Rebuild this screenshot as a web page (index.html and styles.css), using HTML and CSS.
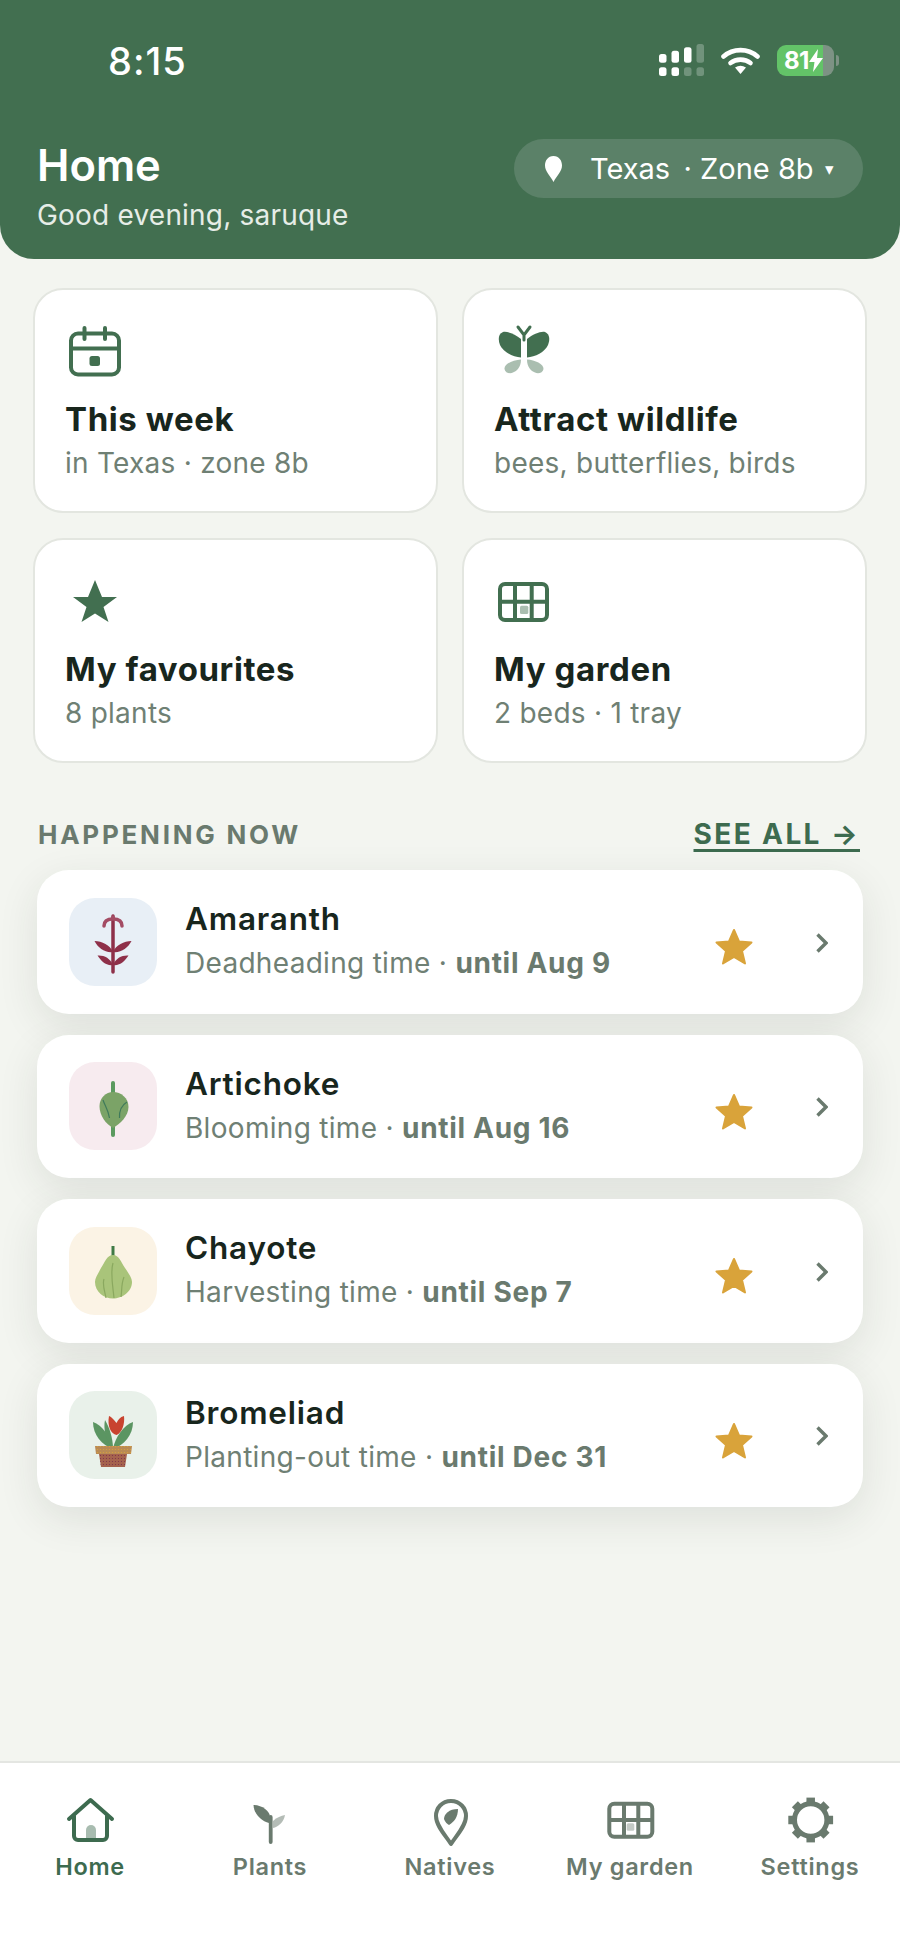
FILE: index.html
```html
<!DOCTYPE html>
<html lang="en">
<head>
    <meta charset="UTF-8">
    <meta name="viewport" content="width=device-width, initial-scale=1.0">
    <title>Home</title>
    <link rel="stylesheet" href="styles.css">
</head>
<body>
    <header class="top">
        <div class="status">
            <span class="time">8:15</span>
            <div class="status-icons">
                <svg class="signal" width="45" height="32" viewBox="0 0 45 32" fill="#fff">
                    <rect x="0" y="10" width="7.5" height="8.7" rx="2.5"/>
                    <rect x="12.5" y="6.7" width="7.5" height="12" rx="2.5"/>
                    <rect x="25" y="3.3" width="7.5" height="15.4" rx="2.5"/>
                    <rect x="37.5" y="0" width="7.5" height="18.7" rx="2.5" opacity=".25"/>
                    <rect x="0" y="23.3" width="7.5" height="8.7" rx="2.5"/>
                    <rect x="12.5" y="23.3" width="7.5" height="8.7" rx="2.5"/>
                    <rect x="25" y="23.3" width="7.5" height="8.7" rx="2.5" opacity=".25"/>
                    <rect x="37.5" y="23.3" width="7.5" height="8.7" rx="2.5" opacity=".25"/>
                </svg>
                <svg class="wifi" width="39" height="27" viewBox="0 0 39 27" fill="none" stroke="#fff" stroke-width="4.6" stroke-linecap="round">
                    <path d="M2.5 9.5C12 1 27 1 36.5 9.5"/>
                    <path d="M9.5 16C15 11.5 24 11.5 29.5 16"/>
                    <path d="M14 20.5Q19.5 17 25 20.5L19.5 27Z" fill="#fff" stroke="none"/>
                </svg>
                <div class="battery-wrap">
                    <div class="battery">
                        <span>81</span>
                        <svg width="14" height="23" viewBox="0 0 14 23" fill="#fff"><path d="M9 0 0 13h5.500L4 23l10-14H8z"/></svg>
                    </div>
                    <div class="battery-nub"></div>
                </div>
            </div>
        </div>
        <div class="top-row">
            <div>
                <h1>Home</h1>
                <p class="greeting">Good evening, saruque</p>
            </div>
            <button class="location">
                <svg width="23" height="26" viewBox="0 0 23 26" fill="#fff"><path d="M11.500 0C6 0 3 4.500 3 9.500 3 15.500 8.500 20 11.500 26 14.500 20 20 15.500 20 9.500 20 4.500 17 0 11.500 0Z"/></svg>
                <span class="location-name">Texas &#8201;· Zone 8b</span>
                <span class="caret">▾</span>
            </button>
        </div>
    </header>

    <main class="content">
        <section class="cards">
            <div class="card">
                <svg class="card-icon" width="58" height="58" viewBox="0 0 58 58" fill="none" stroke="#426f50" stroke-width="4">
                    <rect x="5" y="10.500" width="48" height="41" rx="7"/>
                    <path d="M5 25.500h48"/>
                    <path d="M18.500 5v11M39 5v11" stroke-linecap="round"/>
                    <rect x="23.500" y="33" width="10.500" height="10" rx="2.500" fill="#426f50" stroke="none"/>
                </svg>
                <h3>This week</h3>
                <p>in Texas · zone 8b</p>
            </div>
            <div class="card">
                <svg class="card-icon" width="58" height="58" viewBox="0 0 58 58" fill="#426f50">
                    <path d="M26 16C20 11 12 8 8 9 3 11 3 17 5 22c3 7 13 12 21 12.500Z"/>
                    <path d="M32 16C38 11 46 8 50 9c5 2 5 8 3 13-3 7-13 12-21 12.500Z"/>
                    <path opacity=".45" d="M26 36.500C18 37 9 41 9.500 46c.5 4 5.500 5 8.500 3.500 4-1.500 8-5.500 8-13Z"/>
                    <path opacity=".45" d="M32 36.500C40 37 49 41 48.500 46c-.5 4-5.500 5-8.500 3.500-4-1.500-8-5.500-8-13Z"/>
                    <path d="M23 4l6 8 6-8M29 12v5" fill="none" stroke="#426f50" stroke-width="3" stroke-linecap="round"/>
                </svg>
                <h3>Attract wildlife</h3>
                <p>bees, butterflies, birds</p>
            </div>
            <div class="card">
                <svg class="card-icon" width="58" height="58" viewBox="0 0 58 58" fill="#426f50">
                    <polygon points="29,7 36,24 51,24 37.500,34 42.500,49 29,40.500 15.500,49 20.500,34 7,24 22,24"/>
                </svg>
                <h3>My favourites</h3>
                <p>8 plants</p>
            </div>
            <div class="card">
                <svg class="card-icon" width="58" height="58" viewBox="0 0 58 58" fill="none" stroke="#426f50" stroke-width="4">
                    <rect x="5" y="11" width="47" height="36" rx="5"/>
                    <path d="M20 11v36M36.700 11v36M5 28.700h47"/>
                    <rect x="25" y="32.700" width="8.300" height="8.300" rx="1.500" fill="#426f50" stroke="none" opacity=".45"/>
                </svg>
                <h3>My garden</h3>
                <p>2 beds · 1 tray</p>
            </div>
        </section>

        <div class="section-head">
            <h2>HAPPENING NOW</h2>
            <a class="see-all" href="#">SEE ALL →</a>
        </div>

        <section class="rows">
            <div class="row">
                <div class="thumb thumb-blue">
                    <svg width="88" height="88" viewBox="0 0 88 88" fill="none">
                        <path d="M44 18v56" stroke="#8e3049" stroke-width="3.500" stroke-linecap="round"/>
                        <path d="M35 28C35 23 39 21 44 21s9 2 9 7" stroke="#a44c64" stroke-width="3.500" stroke-linecap="round"/>
                        <path d="M40.500 22 44 16.500 47.500 22Z" fill="#a44c64"/>
                        <path d="M25.500 43C33 43 41 47 44 54 36 55 29 50 25.500 43ZM62.500 43C55 43 47 47 44 54 52 55 59 50 62.500 43Z" fill="#8e3049"/>
                        <path d="M28.500 57.500C35 57 41 60 44 67 37 68 32 63 28.500 57.500ZM59.500 57.500C53 57 47 60 44 67 51 68 56 63 59.500 57.500Z" fill="#8e3049"/>
                    </svg>
                </div>
                <div class="row-text">
                    <h3>Amaranth</h3>
                    <p>Deadheading time · <b>until Aug 9</b></p>
                </div>
                <svg class="row-star" width="38" height="37" viewBox="0 0 38 37" fill="#d9a33a" stroke="#d9a33a" stroke-width="2" stroke-linejoin="round">
                    <polygon points="19,2 24,13.500 36.500,14.500 27,23 30,35.500 19,29 8,35.500 11,23 1.500,14.500 14,13.500"/>
                </svg>
                <svg class="chevron" width="12" height="20" viewBox="0 0 12 20" fill="none" stroke="#6a7a6e" stroke-width="3.400"><path d="M1.500 1.500 10 10l-8.500 8.500"/></svg>
            </div>
            <div class="row">
                <div class="thumb thumb-pink">
                    <svg width="88" height="88" viewBox="0 0 88 88" fill="none">
                        <path d="M44 21v52" stroke="#5b9a5f" stroke-width="4" stroke-linecap="round"/>
                        <path d="M44 30C52 30 59.500 36 59.500 45 59.500 54 51 62 44 66 37 62 30.500 54 30.500 44 30.500 36 37 30 44 30Z" fill="#7ba367"/>
                        <path d="M34 38C36 44 39 47 40.500 56M58 40C53 43 50 48 50.500 56" stroke="#3f7a5a" stroke-width="1.200"/>
                    </svg>
                </div>
                <div class="row-text">
                    <h3>Artichoke</h3>
                    <p>Blooming time · <b>until Aug 16</b></p>
                </div>
                <svg class="row-star" width="38" height="37" viewBox="0 0 38 37" fill="#d9a33a" stroke="#d9a33a" stroke-width="2" stroke-linejoin="round">
                    <polygon points="19,2 24,13.500 36.500,14.500 27,23 30,35.500 19,29 8,35.500 11,23 1.500,14.500 14,13.500"/>
                </svg>
                <svg class="chevron" width="12" height="20" viewBox="0 0 12 20" fill="none" stroke="#6a7a6e" stroke-width="3.400"><path d="M1.500 1.500 10 10l-8.500 8.500"/></svg>
            </div>
            <div class="row">
                <div class="thumb thumb-cream">
                    <svg width="88" height="88" viewBox="0 0 88 88" fill="none">
                        <path d="M44 19v11" stroke="#3f7a45" stroke-width="3"/>
                        <path d="M44 28C50 28 52 35 56 41 60 47 63 51 63 55 63 65 53 71.500 44 71.500 35 71.500 26 65 26 55 26 51 29 47 32 41 36 35 38 28 44 28Z" fill="#a9c47a"/>
                        <path d="M35 52C33 58 36 65 37 71M44 36C41 46 44 60 45 71M55 50C52 57 53 65 52 70" stroke="#8aa85f" stroke-width="1.200"/>
                    </svg>
                </div>
                <div class="row-text">
                    <h3>Chayote</h3>
                    <p>Harvesting time · <b>until Sep 7</b></p>
                </div>
                <svg class="row-star" width="38" height="37" viewBox="0 0 38 37" fill="#d9a33a" stroke="#d9a33a" stroke-width="2" stroke-linejoin="round">
                    <polygon points="19,2 24,13.500 36.500,14.500 27,23 30,35.500 19,29 8,35.500 11,23 1.500,14.500 14,13.500"/>
                </svg>
                <svg class="chevron" width="12" height="20" viewBox="0 0 12 20" fill="none" stroke="#6a7a6e" stroke-width="3.400"><path d="M1.500 1.500 10 10l-8.500 8.500"/></svg>
            </div>
            <div class="row">
                <div class="thumb thumb-green">
                    <svg width="88" height="88" viewBox="0 0 88 88" fill="none">
                        <defs>
                            <pattern id="potDots" width="3" height="3" patternUnits="userSpaceOnUse">
                                <circle cx="1.500" cy="1.500" r=".6" fill="#7c2f4a"/>
                            </pattern>
                            <pattern id="rimDots" width="3" height="3" patternUnits="userSpaceOnUse">
                                <circle cx="1.500" cy="1.500" r=".6" fill="#d9a33a"/>
                            </pattern>
                        </defs>
                        <path d="M24 31C33 34 42 46 44 58 33 54 24 44 24 31Z" fill="#5b9562"/>
                        <path d="M64 31C55 34 46 46 44 58 55 54 64 44 64 31Z" fill="#5b9562"/>
                        <path d="M36 29C40 36 44 46 44 58 37 50 34 38 36 29Z" fill="#5b9562"/>
                        <path d="M40 25C43 26 46 30 47.500 32 49 29 51 26 55 25 56 33 53 42 47.500 44 42 43 38 35 40 25Z" fill="#c8432f"/>
                        <path d="M30 63h28l-2 13H32Z" fill="#a5624d"/>
                        <path d="M30 63h28l-2 13H32Z" fill="url(#potDots)"/>
                        <path d="M26 55h37l-1 8H27Z" fill="#b98a55"/>
                        <path d="M26 55h37l-1 8H27Z" fill="url(#rimDots)"/>
                    </svg>
                </div>
                <div class="row-text">
                    <h3>Bromeliad</h3>
                    <p>Planting-out time · <b>until Dec 31</b></p>
                </div>
                <svg class="row-star" width="38" height="37" viewBox="0 0 38 37" fill="#d9a33a" stroke="#d9a33a" stroke-width="2" stroke-linejoin="round">
                    <polygon points="19,2 24,13.500 36.500,14.500 27,23 30,35.500 19,29 8,35.500 11,23 1.500,14.500 14,13.500"/>
                </svg>
                <svg class="chevron" width="12" height="20" viewBox="0 0 12 20" fill="none" stroke="#6a7a6e" stroke-width="3.400"><path d="M1.500 1.500 10 10l-8.500 8.500"/></svg>
            </div>
        </section>
    </main>

    <nav class="tabs">
        <a class="tab tab-active" href="#">
            <svg width="60" height="50" viewBox="0 0 60 50" fill="none" stroke="currentColor" stroke-width="4" stroke-linecap="round" stroke-linejoin="round">
                <path d="M26 43h10V33a5 5 0 0 0-10 0Z" fill="currentColor" stroke="none" opacity=".45"/>
                <path d="M9 22 30.500 3 52 22"/>
                <path d="M14 19v20a4 4 0 0 0 4 4h25a4 4 0 0 0 4-4V19"/>
            </svg>
            <span>Home</span>
        </a>
        <a class="tab" href="#">
            <svg width="60" height="50" viewBox="0 0 60 50" fill="currentColor">
                <path d="M30.700 20v25" stroke="currentColor" stroke-width="3.800" stroke-linecap="round"/>
                <path d="M13.500 8C22 8 30 14 30 20l-1 6C22 24 14 18 13.500 8Z"/>
                <path d="M33 24C37 20 41 19 45 18 44 25 38 30 33 31Z" opacity=".5"/>
            </svg>
            <span>Plants</span>
        </a>
        <a class="tab" href="#">
            <svg width="60" height="50" viewBox="0 0 60 50" fill="none" stroke="currentColor" stroke-width="4" stroke-linejoin="round">
                <path d="M31 4C22 4 16 11 16 19 16 29 26 39 31 47 36 39 46 29 46 19 46 11 40 4 31 4Z"/>
                <path d="M38 12C29 12 24 17 24 22 25 25 27 27 29 28 34 25 38 20 38 12Z" fill="currentColor" stroke="none"/>
            </svg>
            <span>Natives</span>
        </a>
        <a class="tab" href="#">
            <svg width="60" height="50" viewBox="0 0 60 50" fill="none" stroke="currentColor" stroke-width="4">
                <rect x="9.300" y="6.700" width="43" height="33" rx="5"/>
                <path d="M24 6.700v33M38.300 6.700v33M9.300 23h43"/>
                <rect x="26.700" y="26.300" width="7.600" height="7.400" rx="1.500" fill="currentColor" stroke="none" opacity=".4"/>
            </svg>
            <span>My garden</span>
        </a>
        <a class="tab" href="#">
            <svg width="60" height="50" viewBox="0 0 60 50" fill="none" stroke="currentColor">
                <circle cx="30.700" cy="23" r="16.200" stroke-width="5"/>
                <g stroke-width="8.500">
                    <path d="M30.700 0.600v6"/>
                    <path d="M30.700 0.600v6" transform="rotate(45 30.700 23)"/>
                    <path d="M30.700 0.600v6" transform="rotate(90 30.700 23)"/>
                    <path d="M30.700 0.600v6" transform="rotate(135 30.700 23)"/>
                    <path d="M30.700 0.600v6" transform="rotate(180 30.700 23)"/>
                    <path d="M30.700 0.600v6" transform="rotate(225 30.700 23)"/>
                    <path d="M30.700 0.600v6" transform="rotate(270 30.700 23)"/>
                    <path d="M30.700 0.600v6" transform="rotate(315 30.700 23)"/>
                </g>
            </svg>
            <span>Settings</span>
        </a>
    </nav>
</body>
</html>
```

FILE: styles.css
```css
* {
    box-sizing: border-box;
}
body {
    font-family: Inter, "Liberation Sans", sans-serif;
    background-color: #f3f5f0;
    margin: 0;
    width: 900px;
    height: 1955px;
    display: flex;
    flex-direction: column;
    overflow: hidden;
}
h1, h2, h3, p {
    margin: 0;
}

/* header */
.top {
    background-color: #426f50;
    color: #fff;
    height: 259px;
    padding: 44px 37px 0 37px;
    border-radius: 0 0 34px 34px;
}
.status {
    display: flex;
    justify-content: space-between;
    align-items: center;
    height: 32px;
    padding: 0 24px 0 71px;
}
.time {
    font-size: 38px;
    font-weight: 500;
    line-height: 32px;
    letter-spacing: 1px;
    margin-top: 2px;
}
.status-icons {
    display: flex;
    align-items: center;
    gap: 17px;
}
.battery-wrap {
    display: flex;
    align-items: center;
    gap: 2px;
}
.battery {
    width: 57px;
    height: 31px;
    display: flex;
    align-items: center;
    padding-left: 7px;
    border-radius: 9px;
    background: linear-gradient(90deg, #63c368 81%, #7d9284 81%);
    font-size: 24px;
    font-weight: 700;
    letter-spacing: -0.5px;
}
.battery-nub {
    width: 3px;
    height: 11px;
    border-radius: 0 3px 3px 0;
    background-color: #7d9284;
}
.top-row {
    display: flex;
    justify-content: space-between;
    align-items: flex-start;
    margin-top: 63px;
}
h1 {
    font-size: 43.500px;
    font-weight: 600;
    line-height: 52px;
}
.greeting {
    font-size: 28px;
    line-height: 34px;
    letter-spacing: 0.2px;
    margin-top: 7px;
    color: #e6ede7;
}
.location {
    display: flex;
    align-items: center;
    height: 59px;
    width: 349px;
    padding: 0 0 0 28px;
    border: none;
    border-radius: 30px;
    background-color: #5b8168;
    color: #fff;
    font-family: inherit;
}
.location-name {
    font-size: 29px;
    margin-left: 25px;
    white-space: nowrap;
}
.caret {
    font-size: 17px;
    margin-left: 11px;
}

/* shortcut cards */
.content {
    flex: 1;
}
.cards {
    display: grid;
    grid-template-columns: 405px 405px;
    grid-auto-rows: 225px;
    gap: 25px 24px;
    padding: 29px 33px 0;
}
.card {
    background-color: #fff;
    border: 2px solid #e3e6e0;
    border-radius: 30px;
    padding: 33px 0 0 30px;
}
.card-icon {
    display: block;
    margin-left: 1px;
}
.card h3 {
    font-size: 33px;
    font-weight: 700;
    line-height: 40px;
    letter-spacing: 0.6px;
    color: #18261d;
    margin-top: 18px;
}
.card p {
    font-size: 28px;
    line-height: 34px;
    letter-spacing: 0.25px;
    color: #6f8074;
    margin-top: 7px;
}

/* happening now */
.section-head {
    display: flex;
    justify-content: space-between;
    align-items: baseline;
    padding: 0 40px 0 38px;
    margin-top: 55px;
    line-height: 32px;
}
h2 {
    font-size: 26px;
    font-weight: 700;
    letter-spacing: 2.750px;
    color: #6a7a6e;
}
.see-all {
    font-size: 28px;
    font-weight: 700;
    letter-spacing: 2.400px;
    color: #3d6b4f;
    text-decoration: underline;
    text-decoration-thickness: 3px;
    text-underline-offset: 5px;
}
.rows {
    display: flex;
    flex-direction: column;
    gap: 21px;
    margin: 19px 37px 0;
}
.row {
    display: flex;
    align-items: center;
    height: 143.500px;
    padding-left: 32px;
    background-color: #fff;
    border-radius: 32px;
    box-shadow: 0 12px 40px rgba(40, 50, 40, 0.1);
}
.thumb {
    width: 88px;
    height: 88px;
    border-radius: 26px;
    flex-shrink: 0;
}
.thumb svg {
    display: block;
}
.thumb-blue {
    background-color: #e8eff6;
}
.thumb-pink {
    background-color: #f7ebef;
}
.thumb-cream {
    background-color: #fbf3e5;
}
.thumb-green {
    background-color: #e9f1ea;
}
.row-text {
    margin-left: 28px;
    padding-bottom: 3px;
}
.row-text h3 {
    font-size: 31.500px;
    font-weight: 600;
    line-height: 38px;
    letter-spacing: 0.8px;
    color: #18261d;
}
.row-text p {
    font-size: 28px;
    line-height: 34px;
    letter-spacing: 0.3px;
    color: #6f8074;
    margin-top: 8px;
    white-space: nowrap;
}
.row-text b {
    font-weight: 700;
    letter-spacing: 0.7px;
    color: #6a7a6e;
}
.row-star {
    margin-left: auto;
    margin-top: 10px;
}
.chevron {
    margin: 2px 35px 0 63px;
}

/* bottom tabs */
.tabs {
    display: grid;
    grid-template-columns: repeat(5, 1fr);
    height: 194px;
    padding-top: 34px;
    background-color: #fff;
    border-top: 2px solid #e4e6e2;
}
.tab {
    display: flex;
    flex-direction: column;
    align-items: center;
    color: #6a7a6e;
    text-decoration: none;
    font-size: 23.500px;
    font-weight: 600;
    letter-spacing: 0.7px;
    line-height: 30px;
}
.tab svg {
    display: block;
    margin-bottom: 5px;
}
.tab-active {
    color: #3d6b4f;
}
```
